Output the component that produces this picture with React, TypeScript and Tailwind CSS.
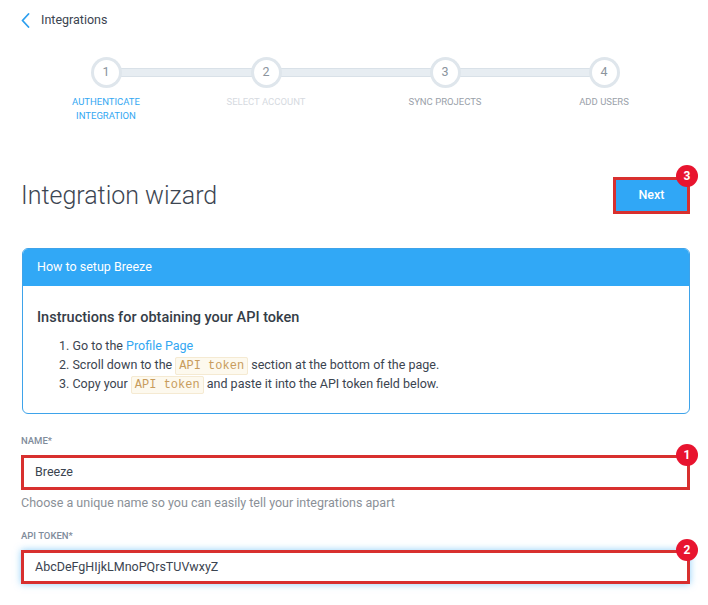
import React from "react";

const steps = [
    { n: 1, label: ["AUTHENTICATE", "INTEGRATION"], tone: "text-[#33a7f2]" },
    { n: 2, label: ["SELECT ACCOUNT"], tone: "text-[#d6dadf]" },
    { n: 3, label: ["SYNC PROJECTS"], tone: "text-[#9aa1a9]" },
    { n: 4, label: ["ADD USERS"], tone: "text-[#9aa1a9]" },
];

const Badge = ({ n, className }: { n: number; className: string }) => (
    <span
        className={`absolute flex h-[22px] w-[22px] items-center justify-center rounded-full bg-[#e8142f] text-[12px] font-bold text-white ${className}`}
    >
        {n}
    </span>
);

const Code = ({ children }: { children: React.ReactNode }) => (
    <code className="rounded-[2px] border border-[#f5ead2] bg-[#fdf9ee] px-[3px] py-px font-['Liberation_Mono',monospace] text-[12px] text-[#c89c5c]">
        {children}
    </code>
);

export default function App() {
    return (
        <div className="min-h-[605px] w-[708px] bg-white font-['Roboto',sans-serif] text-[12.5px] text-[#3b4450]">
            {/* back link */}
            <div className="flex h-[40px] items-center gap-[11px] pl-[21px]">
                <svg width="9" height="15" viewBox="0 0 9 15" fill="none">
                    <path d="M7.5 1 L1.5 7.5 L7.5 14" stroke="#2d9fee" strokeWidth="1.8" strokeLinecap="round" strokeLinejoin="round" />
                </svg>
                <span className="text-[12.5px] text-[#3b4450]">Integrations</span>
            </div>

            {/* stepper */}
            <div className="relative mt-[17px] grid h-[64px] grid-cols-[160px_160px_198px_120px] pl-[26px]">
                <div className="absolute top-[11px] left-[106px] h-[9px] w-[498px] rounded-full border border-[#d9e1e8] bg-[#e7edf2]" />
                {steps.map((s) => (
                    <div key={s.n} className="relative flex flex-col items-center">
                        <div className="flex h-[31px] w-[31px] items-center justify-center rounded-full bg-[#dfe6ec]">
                            <div className="flex h-[25px] w-[25px] items-center justify-center rounded-full bg-white text-[12.5px] text-[#8b949d]">
                                {s.n}
                            </div>
                        </div>
                        <div className={`mt-[7px] text-center text-[9.5px] leading-[14px] ${s.tone}`}>
                            {s.label.map((l) => (
                                <div key={l}>{l}</div>
                            ))}
                        </div>
                    </div>
                ))}
            </div>

            {/* title row */}
            <div className="mt-[56px] flex items-center justify-between pr-[18px] pl-[21px]">
                <h1 className="text-[25px] font-light text-[#3d4652]">Integration wizard</h1>
                <div className="relative">
                    <button className="h-[37px] w-[77px] border-[3px] border-[#d8302f] bg-[#30a7f6] text-[12.5px] font-medium text-white">
                        Next
                    </button>
                    <Badge n={3} className="-top-[12px] -right-[8px]" />
                </div>
            </div>

            {/* setup panel */}
            <div className="mt-[33px] mr-[18px] ml-[22px] overflow-hidden rounded-[6px] border border-[#3ea3ea]">
                <div className="flex h-[37px] items-center bg-[#31a8f6] pl-[14px] text-[12.5px] text-white">How to setup Breeze</div>
                <div className="px-[14px] pt-[21px] pb-[18px]">
                    <h2 className="text-[14.5px] font-medium text-[#353d47]">Instructions for obtaining your API token</h2>
                    <div className="mt-[9px] pl-[22px] leading-[18.5px]">
                        <div>
                            1. Go to the <span className="text-[#33a7f2]">Profile Page</span>
                        </div>
                        <div>
                            2. Scroll down to the <Code>API token</Code> section at the bottom of the page.
                        </div>
                        <div>
                            3. Copy your <Code>API token</Code> and paste it into the API token field below.
                        </div>
                    </div>
                </div>
            </div>

            {/* form */}
            <div className="mt-[20px] pr-[18px] pl-[21px]">
                <label className="block text-[9.5px] font-medium text-[#7f8c9b]">NAME*</label>
                <div className="relative mt-[7px]">
                    <div className="flex h-[35px] items-center border-[3px] border-[#d8302f] bg-white pl-[11px] text-[12.5px] text-[#3b4450]">Breeze</div>
                    <Badge n={1} className="-top-[11px] -right-[8px]" />
                </div>
                <p className="mt-[4px] text-[12.5px] text-[#8a9097]">Choose a unique name so you can easily tell your integrations apart</p>

                <label className="mt-[16px] block text-[9.5px] font-medium text-[#7f8c9b]">API TOKEN*</label>
                <div className="relative mt-[7px]">
                    <div className="flex h-[34px] items-center border-[3px] border-[#d8302f] bg-white pl-[11px] text-[12.5px] text-[#3b4450] shadow-[0_0_7px_rgba(48,167,246,0.55)]">
                        AbcDeFgHIjkLMnoPQrsTUVwxyZ
                    </div>
                    <Badge n={2} className="-top-[11px] -right-[8px]" />
                </div>
            </div>
        </div>
    );
}
